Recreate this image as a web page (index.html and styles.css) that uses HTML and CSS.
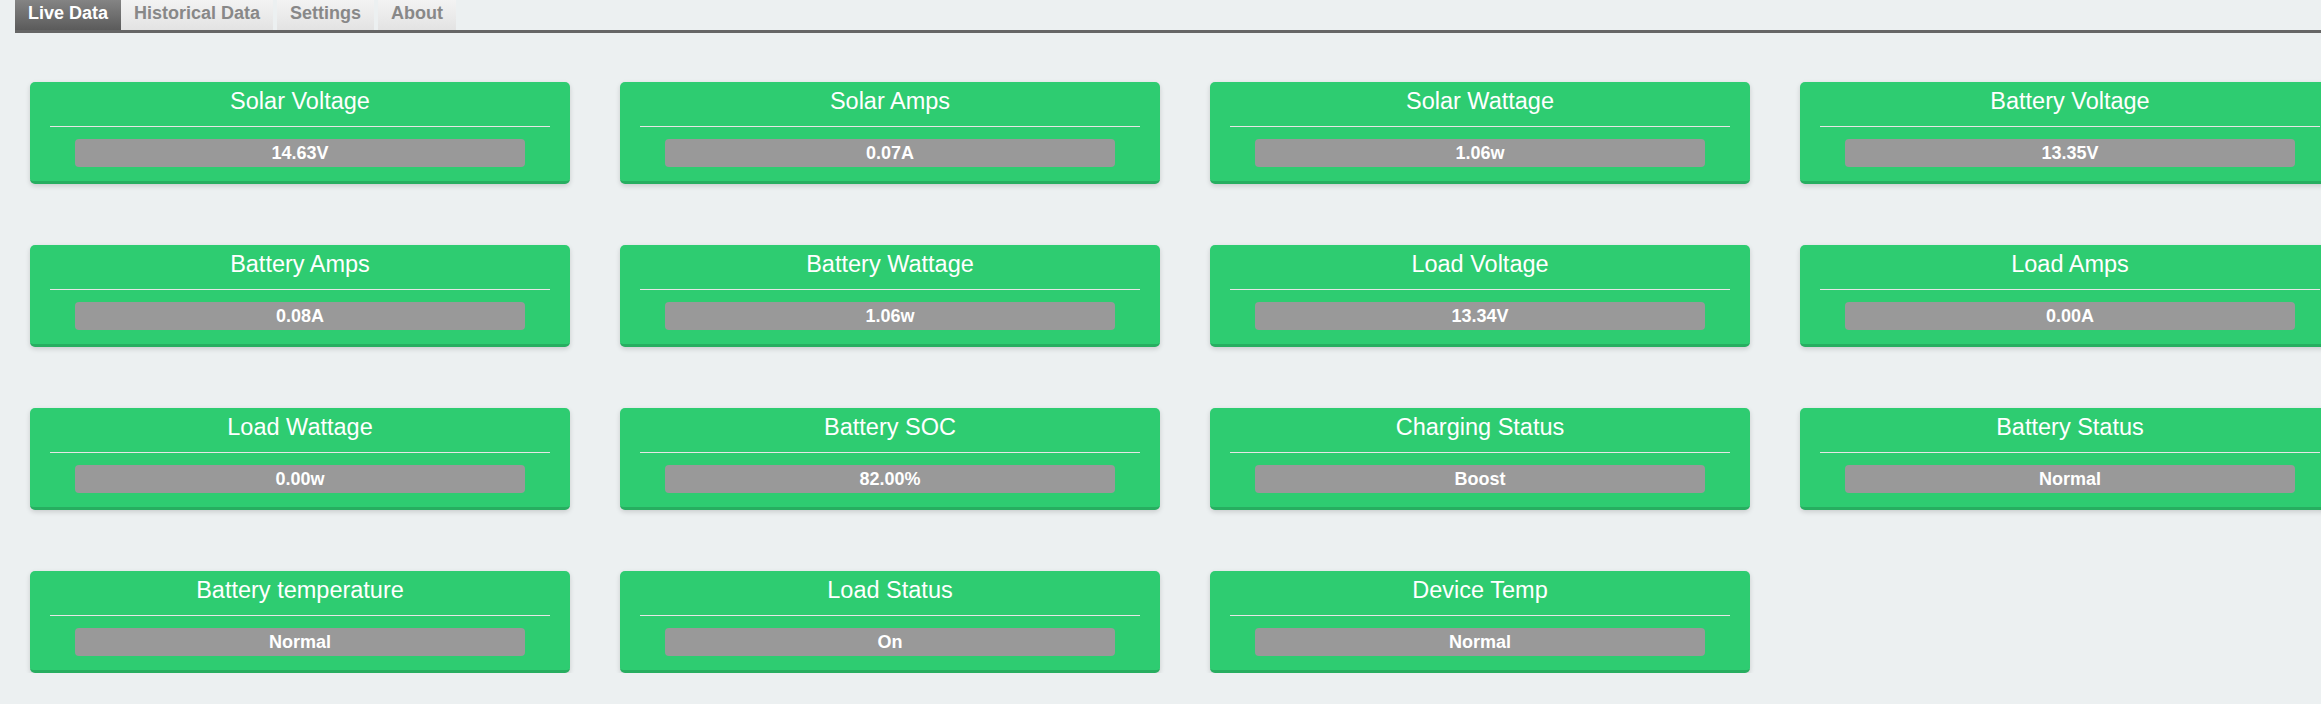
FILE: index.html
```html
<!DOCTYPE html>
<html lang="en">
<head>
    <meta charset="UTF-8">
    <meta name="viewport" content="width=device-width, initial-scale=1.0">
    <title>Live Data</title>
    <link rel="stylesheet" href="styles.css">
</head>
<body>
    <nav class="tabs">
        <a class="tab active" href="#">Live Data</a>
        <a class="tab" href="#">Historical Data</a>
        <a class="tab" href="#">Settings</a>
        <a class="tab" href="#">About</a>
    </nav>

    <div class="dashboard">
        <div class="card">
            <h3 class="card-title">Solar Voltage</h3>
            <hr>
            <div class="card-value">14.63V</div>
        </div>
        <div class="card">
            <h3 class="card-title">Solar Amps</h3>
            <hr>
            <div class="card-value">0.07A</div>
        </div>
        <div class="card">
            <h3 class="card-title">Solar Wattage</h3>
            <hr>
            <div class="card-value">1.06w</div>
        </div>
        <div class="card">
            <h3 class="card-title">Battery Voltage</h3>
            <hr>
            <div class="card-value">13.35V</div>
        </div>

        <div class="card">
            <h3 class="card-title">Battery Amps</h3>
            <hr>
            <div class="card-value">0.08A</div>
        </div>
        <div class="card">
            <h3 class="card-title">Battery Wattage</h3>
            <hr>
            <div class="card-value">1.06w</div>
        </div>
        <div class="card">
            <h3 class="card-title">Load Voltage</h3>
            <hr>
            <div class="card-value">13.34V</div>
        </div>
        <div class="card">
            <h3 class="card-title">Load Amps</h3>
            <hr>
            <div class="card-value">0.00A</div>
        </div>

        <div class="card">
            <h3 class="card-title">Load Wattage</h3>
            <hr>
            <div class="card-value">0.00w</div>
        </div>
        <div class="card">
            <h3 class="card-title">Battery SOC</h3>
            <hr>
            <div class="card-value">82.00%</div>
        </div>
        <div class="card">
            <h3 class="card-title">Charging Status</h3>
            <hr>
            <div class="card-value">Boost</div>
        </div>
        <div class="card">
            <h3 class="card-title">Battery Status</h3>
            <hr>
            <div class="card-value">Normal</div>
        </div>

        <div class="card">
            <h3 class="card-title">Battery temperature</h3>
            <hr>
            <div class="card-value">Normal</div>
        </div>
        <div class="card">
            <h3 class="card-title">Load Status</h3>
            <hr>
            <div class="card-value">On</div>
        </div>
        <div class="card">
            <h3 class="card-title">Device Temp</h3>
            <hr>
            <div class="card-value">Normal</div>
        </div>
    </div>
</body>
</html>
```

FILE: styles.css
```css
body {
    margin: 0;
    background-color: #ecf0f1;
    font-family: "Liberation Sans", Arial, sans-serif;
    overflow: hidden;
}

/* Tabs */
.tabs {
    display: flex;
    margin-left: 15px;
    border-bottom: 3px solid #666;
}

.tab {
    padding: 0 13px 4px;
    margin-right: 4px;
    line-height: 26px;
    font-size: 18px;
    font-weight: bold;
    color: #888;
    text-decoration: none;
    background: linear-gradient(#f3f3f3, #e3e3e3);
}

.tab.active {
    margin-right: 0;
    color: #fff;
    background: linear-gradient(#848484, #5b5b5b);
}

/* Cards */
.dashboard {
    display: grid;
    grid-template-columns: repeat(4, 540px);
    column-gap: 50px;
    row-gap: 61px;
    padding: 49px 0 0 30px;
}

.card {
    padding: 0 20px 14px;
    background: #2ecc71;
    border-bottom: 3px solid #27ae60;
    border-radius: 5px;
    box-shadow: 0 2px 5px rgba(0, 0, 0, 0.15);
    color: #fff;
    text-align: center;
}

.card-title {
    margin: 0;
    font-size: 23.5px;
    font-weight: normal;
    line-height: 38px;
}

.card hr {
    margin: 6px 0 12px;
    border: 0;
    border-top: 1px solid #e6e6e6;
}

.card-value {
    margin: 0 25px;
    height: 28px;
    line-height: 28px;
    background: #999;
    border-radius: 4px;
    font-size: 18px;
    font-weight: bold;
}
```
